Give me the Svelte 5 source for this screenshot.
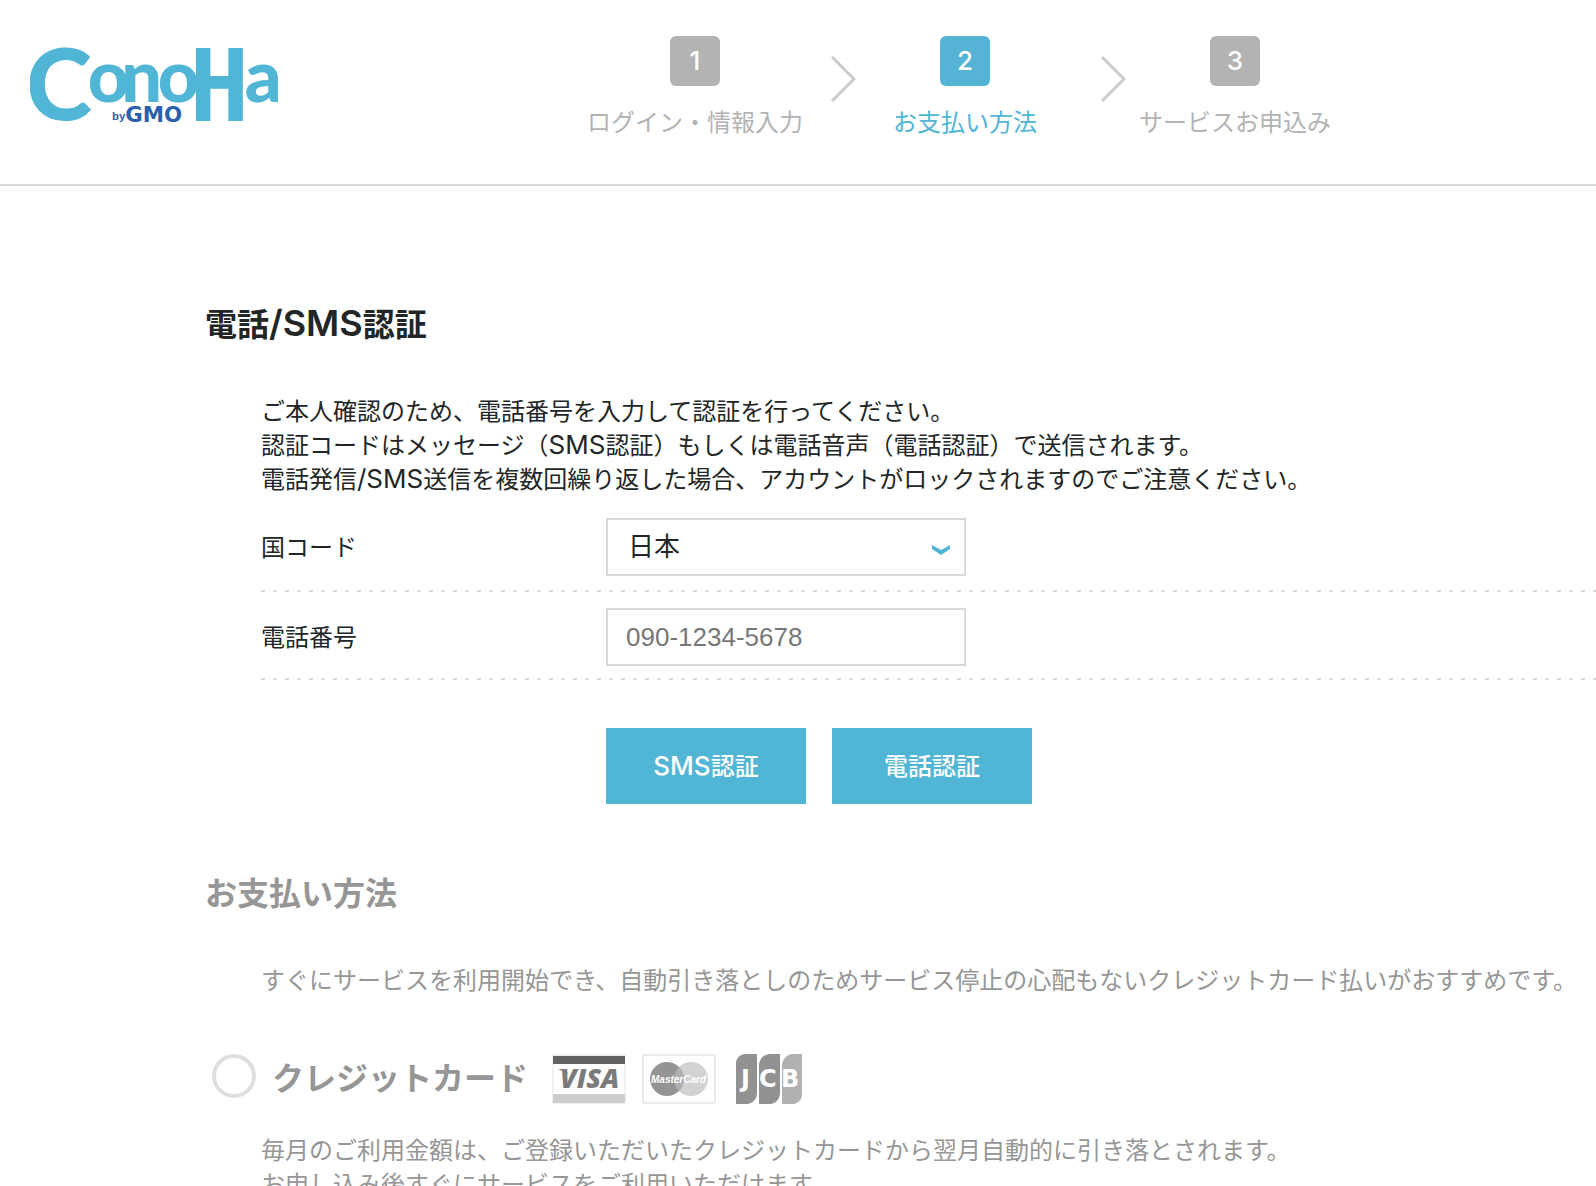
<script lang="ts">
  const steps = [
    { no: 1, label: 'ログイン・情報入力' },
    { no: 2, label: 'お支払い方法' },
    { no: 3, label: 'サービスお申込み' },
  ];
  const currentStep = 2;

  let country = $state('JP');
  let phone = $state('');
  let payment = $state('');
</script>

<header>
  <a class="logo" href="/" aria-label="ConoHa by GMO">
    <svg viewBox="30 50 750 240" width="250" height="80" aria-hidden="true">
      <text class="word" y="269">
        <tspan class="cap" x="18">C</tspan><tspan class="ring" x="203" y="216">o</tspan><tspan x="304" y="216">n</tspan><tspan x="413" y="216">o</tspan><tspan class="tall" x="508" y="271">H</tspan><tspan x="674" y="216">a</tspan>
      </text>
      <text class="by" x="276" y="268">by</text>
      <text class="gmo" x="316" y="275">GMO</text>
    </svg>
  </a>
  <ol class="steps">
    {#each steps as step}
      <li class:current={step.no === currentStep}>
        <span class="no">{step.no}</span>
        <span class="label">{step.label}</span>
        {#if step.no < steps.length}
          <svg class="arrow" viewBox="0 0 26 46" width="26" height="46" aria-hidden="true">
            <path d="M2 1L24 23L2 45" fill="none" stroke="#cbcbcb" stroke-width="3" />
          </svg>
        {/if}
      </li>
    {/each}
  </ol>
</header>

<main>
  <section>
    <h2>電話<span class="latin">/SMS</span>認証</h2>
    <div class="body">
      <p>
        ご本人確認のため、電話番号を入力して認証を行ってください。<br />
        認証コードはメッセージ（<span class="latin">SMS</span>認証）もしくは電話音声（電話認証）で送信されます。<br />
        電話発信<span class="latin">/SMS</span>送信を複数回繰り返した場合、アカウントがロックされますのでご注意ください。
      </p>
      <form onsubmit={(e) => e.preventDefault()}>
        <div class="row">
          <label for="country">国コード</label>
          <div class="field">
            <select id="country" bind:value={country}>
              <option value="JP">日本</option>
            </select>
            <svg class="caret" viewBox="0 0 18 10" width="18" height="10" aria-hidden="true">
              <path d="M0 0L9 5L18 0V4L9 10L0 4Z" fill="#51b5d5" />
            </svg>
          </div>
        </div>
        <div class="row">
          <label for="phone">電話番号</label>
          <div class="field">
            <input id="phone" type="tel" placeholder="090-1234-5678" bind:value={phone} />
          </div>
        </div>
        <div class="buttons">
          <button type="button"><span class="latin">SMS</span>認証</button>
          <button type="button">電話認証</button>
        </div>
      </form>
    </div>
  </section>

  <section class="inactive">
    <h2>お支払い方法</h2>
    <div class="body">
      <p>すぐにサービスを利用開始でき、自動引き落としのためサービス停止の心配もないクレジットカード払いがおすすめです。</p>
    </div>
    <div class="method">
      <input id="card" type="radio" name="payment" value="card" bind:group={payment} />
      <label for="card">クレジットカード</label>
      <div class="brands">
        <svg viewBox="0 0 74 50" width="74" height="50" role="img" aria-label="VISA">
          <rect x="1" y="1" width="72" height="48" fill="#fff" stroke="#e6e6e6" />
          <rect x="1" y="2" width="72" height="8" fill="#636363" />
          <rect x="1" y="40" width="72" height="9" fill="#cdcdcd" />
          <path d="M6 15H14L16 20L11 17Z" fill="#7b7b7b" />
          <text class="visa" x="8" y="34">VISA</text>
        </svg>
        <svg viewBox="0 0 74 50" width="74" height="50" role="img" aria-label="MasterCard">
          <rect x="1" y="1" width="72" height="48" rx="2" fill="#fff" stroke="#ebebeb" stroke-width="2" />
          <circle cx="49" cy="25" r="17" fill="#d2d2d2" />
          <circle cx="25" cy="25" r="17" fill="#949494" />
          <path d="M37 13A17 17 0 0 1 37 37A17 17 0 0 1 37 13Z" fill="#b0b0b0" />
          <text class="master" x="9" y="29">MasterCard</text>
        </svg>
        <svg class="jcb-mark" viewBox="0 0 66 50" width="66" height="50" role="img" aria-label="JCB">
          <path d="M0 50V8Q2 0 10 0H21V40Q20 48 12 50Z" fill="#929292" />
          <path d="M23 50V10Q25 1 33 0H44V40Q43 48 35 50Z" fill="#929292" />
          <path d="M46 50V10Q48 1 56 0H66V42Q65 48 58 50Z" fill="#b1b1b1" />
          <text class="jcb" y="33"><tspan x="5">J</tspan><tspan x="23">C</tspan><tspan x="45">B</tspan></text>
        </svg>
      </div>
    </div>
    <div class="body">
      <p>
        毎月のご利用金額は、ご登録いただいたクレジットカードから翌月自動的に引き落とされます。<br />
        お申し込み後すぐにサービスをご利用いただけます。
      </p>
    </div>
  </section>
</main>

<style>
:global(body) {
  margin: 0;
  background: #fff;
  color: #222626;
  font-family: Inter, "Noto Sans CJK JP", sans-serif;
  font-size: 24px;
  line-height: 34px;
}
header {
  display: flex;
  align-items: flex-start;
  height: 184px;
  border-bottom: 2px solid #d9d9d9;
}
.logo {
  width: 250px;
  padding: 47px 280px 0 30px;
}
.logo svg {
  display: block;
}
.word {
  font: 900 216px Lato, sans-serif;
  fill: #51b5d5;
}
.cap {
  font-size: 300px;
}
.ring {
  stroke: #fff;
  stroke-width: 18px;
  paint-order: stroke;
}
.tall {
  font: bold 300px "DejaVu Sans Mono", monospace;
}
.by {
  font: bold 34px "Liberation Sans", sans-serif;
  fill: #2a60ab;
}
.gmo {
  font: bold 64px "DejaVu Sans", sans-serif;
  fill: #2a60ab;
}
.steps {
  display: flex;
  margin: 0;
  padding: 36px 0 0;
  list-style: none;
}
.steps li {
  position: relative;
  display: flex;
  flex-direction: column;
  align-items: center;
  gap: 20px;
  width: 270px;
  color: #b3b3b3;
}
.no {
  width: 50px;
  border-radius: 6px;
  background: #b3b3b3;
  color: #fff;
  font-size: 26px;
  font-weight: 500;
  line-height: 50px;
  text-align: center;
}
.current .no {
  background: #55b4d6;
}
.steps .current {
  color: #51b5d5;
}
.arrow {
  position: absolute;
  top: 20px;
  right: -26px;
}
main {
  padding: 113px 0 0 205px;
}
h2 {
  margin: 0;
  font-size: 32px;
  line-height: 52px;
  font-weight: 700;
}
/* latin letters run a little larger than the kana beside them */
.latin {
  font-size: 26px;
  line-height: 1;
}
h2 .latin {
  font-size: 36px;
  font-weight: 600;
}
.body {
  padding-left: 56px;
}
p {
  margin: 0;
}
h2 + .body {
  padding-top: 44px;
}
.row {
  display: flex;
  align-items: center;
  padding: 16px 0;
  background: repeating-linear-gradient(90deg, #dcdcdc 0 4px, transparent 4px 12px) left bottom / 100% 2px no-repeat;
}
.row + .row {
  padding-bottom: 14px;
}
form {
  padding-top: 5px;
}
.row label {
  width: 345px;
  padding-top: 2px;
}
.field {
  position: relative;
  width: 360px;
}
select,
.field input {
  display: block;
  box-sizing: border-box;
  width: 100%;
  height: 58px;
  padding: 0 20px;
  border: 2px solid #d9d9d9;
  border-radius: 0;
  background: #fff;
  color: #222626;
  font-family: "Liberation Sans", "Noto Sans CJK JP", sans-serif;
  font-size: 26px;
  appearance: none;
}
.field input {
  padding: 0 18px;
}
.field input::placeholder {
  color: #777;
}
.caret {
  position: absolute;
  right: 16px;
  top: 27px;
  pointer-events: none;
}
.buttons {
  display: flex;
  gap: 26px;
  padding: 48px 0 0 345px;
}
button {
  width: 200px;
  height: 76px;
  padding: 2px 0 0;
  border: 0;
  background: #51b5d5;
  color: #fff;
  font: 500 24px/34px Inter, "Noto Sans CJK JP", sans-serif;
  cursor: pointer;
}
.inactive {
  padding-top: 64px;
  color: #969696;
}
.method {
  display: flex;
  align-items: center;
  padding: 56px 0 30px 7px;
}
.method input {
  appearance: none;
  align-self: flex-start;
  width: 44px;
  height: 44px;
  margin: 0 16px 0 0;
  border: 4px solid #dfdfdf;
  border-radius: 50%;
}
.method input:checked {
  background: radial-gradient(#51b5d5 10px, transparent 11px);
}
.method label {
  font-size: 32px;
  font-weight: 700;
}
.brands {
  display: flex;
  gap: 16px;
  padding-left: 24px;
}
.jcb-mark {
  margin-left: 4px;
}
.visa {
  font: italic 800 27px "Open Sans", sans-serif;
  fill: #7b7b7b;
}
.master {
  font: italic bold 10px "Liberation Sans", sans-serif;
  fill: #fff;
}
.jcb {
  font: bold 24px "DejaVu Sans", sans-serif;
  fill: #fff;
}
</style>
